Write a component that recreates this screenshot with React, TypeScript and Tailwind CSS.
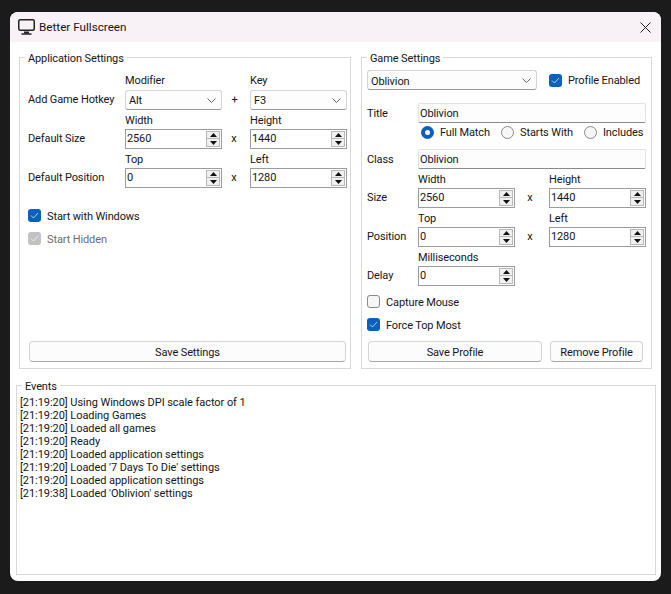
import React from "react";

const Chevron = () => (
  <svg width="9" height="5" viewBox="0 0 9 5" fill="none" stroke="#666" strokeWidth="1" className="shrink-0">
    <path d="M0.5 0.5 L4.5 4.5 L8.5 0.5" />
  </svg>
);

const Select = ({ value, w, top = "pt-[2px]" }: { value: string; w: string; top?: string }) => (
  <div className={`${w} h-[20px] flex items-center justify-between pl-[3px] pr-[5px] bg-[#fdfdfd] border border-[#d4d4d4] border-b-[#9a9a9a] rounded-[3px]`}>
    <span className={top}>{value}</span>
    <Chevron />
  </div>
);

const Spin = ({ value }: { value: string }) => (
  <div className="w-[97px] h-[20px] flex items-center justify-between pl-[1px] pr-[1px] bg-white border border-[#9c9c9c]">
    <span>{value}</span>
    <div className="flex flex-col w-[14px] h-[16px] gap-0">
      <div className="h-[8px] flex items-center justify-center bg-[#f0f0f0] border border-[#b8b8b8]">
        <svg width="7" height="4" viewBox="0 0 7 4"><path d="M3.5 0 L7 4 L0 4 Z" fill="#111" /></svg>
      </div>
      <div className="h-[8px] flex items-center justify-center bg-[#f0f0f0] border border-[#b8b8b8] border-t-0">
        <svg width="7" height="4" viewBox="0 0 7 4"><path d="M0 0 L7 0 L3.5 4 Z" fill="#111" /></svg>
      </div>
    </div>
  </div>
);

const Check = ({ label, checked, disabled }: { label: string; checked?: boolean; disabled?: boolean }) => (
  <div className={`flex items-center gap-[6px] h-[13px] ${disabled ? "text-[#6d6d6d]" : ""}`}>
    {checked ? (
      <div className={`w-[13px] h-[13px] rounded-[3px] flex items-center justify-center ${disabled ? "bg-[#c2c2c2]" : "bg-[#0a61bd]"}`}>
        <svg width="9" height="7" viewBox="0 0 9 7" fill="none" stroke="#fff" strokeWidth="0.8" opacity="0.85"><path d="M1 3.5 L3.5 6 L8 1" /></svg>
      </div>
    ) : (
      <div className="w-[13px] h-[13px] rounded-[3px] bg-[#f6f6f6] border border-[#8a8a8a]" />
    )}
    <span className="pt-[2px]">{label}</span>
  </div>
);

const Radio = ({ label, on, className }: { label: string; on?: boolean; className: string }) => (
  <div className={`flex items-center gap-[6px] ${className}`}>
    {on ? (
      <div className="w-[13px] h-[13px] shrink-0 rounded-full bg-[#0a61bd] flex items-center justify-center">
        <div className="w-[5px] h-[5px] rounded-full bg-white" />
      </div>
    ) : (
      <div className="w-[13px] h-[13px] shrink-0 rounded-full bg-[#f6f6f6] border border-[#8a8a8a]" />
    )}
    <span>{label}</span>
  </div>
);

const Heading = ({ children }: { children?: React.ReactNode }) => (
  <div className="h-[19px] pt-[4px] leading-[14px]">{children}</div>
);

const TextBox = ({ value }: { value: string }) => (
  <div className="w-[228px] h-[20px] flex items-center pl-[1px] pt-[2px] bg-[#fdfdfd] border border-[#e2e2e2] border-b-[#8a8a8a] rounded-[2px]">{value}</div>
);

const Button = ({ label, w }: { label: string; w: string }) => (
  <div className={`${w} h-[21px] flex items-center justify-center pt-[2px] bg-[#fcfcfc] border border-[#d4d4d4] border-b-[#a8a8a8] rounded-[4px]`}>{label}</div>
);

const Group = ({ title, className, children }: { title: string; className: string; children: React.ReactNode }) => (
  <fieldset className={`border border-[#d9d9d9] flex flex-col min-w-0 ${className}`}>
    <legend className="ml-[5px] px-[3px] h-[14px] leading-[18px]">{title}</legend>
    {children}
  </fieldset>
);

const SpinRow = ({ label, a, b, aHead, bHead, cols }: { label: string; a: string; b?: string; aHead: string; bHead?: string; cols: string }) => (
  <div className={`grid ${cols}`}>
    <div />
    <Heading>{aHead}</Heading>
    <div />
    <Heading>{bHead}</Heading>
    <div className="flex items-center">{label}</div>
    <Spin value={a} />
    <div className="flex items-center justify-center pr-[4px]">{b ? "x" : ""}</div>
    {b ? <Spin value={b} /> : <div />}
  </div>
);

const events = [
  "[21:19:20] Using Windows DPI scale factor of 1",
  "[21:19:20] Loading Games",
  "[21:19:20] Loaded all games",
  "[21:19:20] Ready",
  "[21:19:20] Loaded application settings",
  "[21:19:20] Loaded '7 Days To Die' settings",
  "[21:19:20] Loaded application settings",
  "[21:19:38] Loaded 'Oblivion' settings",
];

export default function App() {
  const leftCols = "grid-cols-[97px_97px_28px_97px]";
  const rightCols = "grid-cols-[51px_97px_34px_97px]";
  return (
    <div className="w-[671px] h-[594px] bg-[#1b1b1b] pt-[12px] pl-[10px] text-[11px] leading-[14px] tracking-[-0.12px] text-[#151520] font-['Roboto',sans-serif]">
      <div className="w-[651px] h-[569px] bg-white rounded-[8px] overflow-hidden flex flex-col">
        <div className="h-[30px] shrink-0 bg-[#f8f1f5] flex items-center pl-[8px] pr-[10px]">
          <svg width="17" height="16" viewBox="0 0 17 16" fill="none" className="shrink-0">
            <rect x="0.75" y="0.75" width="15.5" height="10.5" rx="1.5" stroke="#222" strokeWidth="1.5" />
            <path d="M6 12.5 H11 V14.5 H6 Z" fill="#222" />
            <path d="M3.5 15 H13.5" stroke="#222" strokeWidth="1.4" />
          </svg>
          <span className="ml-[4px] text-[11.7px] tracking-normal">Better Fullscreen</span>
          <svg width="11" height="11" viewBox="0 0 11 11" stroke="#222" strokeWidth="1" className="ml-auto">
            <path d="M0.5 0.5 L10.5 10.5 M10.5 0.5 L0.5 10.5" />
          </svg>
        </div>
        <div className="flex gap-[10px] pl-[9px] pt-[8px]">
          <Group title="Application Settings" className="w-[332px] h-[319px]">
            <div className="pl-[8px] pt-[9px] flex flex-col flex-1">
              <div className={`grid ${leftCols}`}>
                <div />
                <div className="h-[17px] pt-[1px] leading-[14px]">Modifier</div>
                <div />
                <div className="h-[17px] pt-[1px] leading-[14px]">Key</div>
                <div className="flex items-center">Add Game Hotkey</div>
                <Select value="Alt" w="w-[97px]" />
                <div className="flex items-center justify-center pr-[3px]">+</div>
                <Select value="F3" w="w-[97px]" />
              </div>
              <SpinRow label="Default Size" aHead="Width" bHead="Height" a="2560" b="1440" cols={leftCols} />
              <SpinRow label="Default Position" aHead="Top" bHead="Left" a="0" b="1280" cols={leftCols} />
              <div className="mt-[21px] flex flex-col gap-[10px]">
                <Check label="Start with Windows" checked />
                <Check label="Start Hidden" checked disabled />
              </div>
              <div className="mt-auto mb-[6px]">
                <Button label="Save Settings" w="w-[317px] ml-[1px]" />
              </div>
            </div>
          </Group>
          <Group title="Game Settings" className="w-[291px] h-[319px]">
            <div className="pl-[5px] pt-[6px] flex flex-col flex-1">
              <div className="flex items-center gap-[12px]">
                <Select value="Oblivion" w="w-[170px]" top="pt-[3px]" />
                <Check label="Profile Enabled" checked />
              </div>
              <div className="mt-[13px] flex items-center">
                <span className="w-[51px] pt-[2px]">Title</span>
                <TextBox value="Oblivion" />
              </div>
              <div className="flex h-[13px] mt-[3px] pl-[54px]">
                <Radio label="Full Match" on className="w-[80px]" />
                <Radio label="Starts With" className="w-[83px]" />
                <Radio label="Includes" className="w-[60px]" />
              </div>
              <div className="mt-[10px] flex items-center">
                <span className="w-[51px] pt-[2px]">Class</span>
                <TextBox value="Oblivion" />
              </div>
              <SpinRow label="Size" aHead="Width" bHead="Height" a="2560" b="1440" cols={rightCols} />
              <SpinRow label="Position" aHead="Top" bHead="Left" a="0" b="1280" cols={rightCols} />
              <SpinRow label="Delay" aHead="Milliseconds" a="0" cols={rightCols} />
              <div className="mt-[9px] flex flex-col gap-[10px]">
                <Check label="Capture Mouse" />
                <Check label="Force Top Most" checked />
              </div>
              <div className="mt-auto mb-[6px] flex pl-[1px] gap-[8px]">
                <Button label="Save Profile" w="w-[174px]" />
                <Button label="Remove Profile" w="w-[93px]" />
              </div>
            </div>
          </Group>
        </div>
        <div className="pl-[6px] pt-[9px]">
          <Group title="Events" className="w-[640px] h-[197px]">
            <div className="pl-[3px] pt-[4px] leading-[13px] tracking-[-0.06px]">
              {events.map((e, i) => (
                <div key={i} className="h-[13px]">{e}</div>
              ))}
            </div>
          </Group>
        </div>
      </div>
    </div>
  );
}
